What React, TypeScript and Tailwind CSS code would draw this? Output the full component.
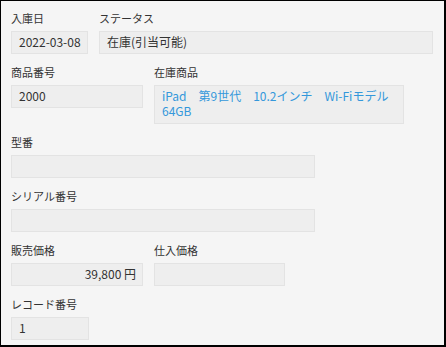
type FieldProps = {
  label: string;
  width: string;
  children?: React.ReactNode;
  box?: string;
};

function Field({ label, width, children, box = "" }: FieldProps) {
  return (
    <div className={width}>
      <div className="h-[18px] leading-[18px] mb-[4px] text-[11px] text-[#333] whitespace-nowrap">
        {label}
      </div>
      <div
        className={`min-h-[23px] border border-[#e3e3e3] bg-[#eeeeee] pl-[7px] pr-[6px] pt-[2px] pb-[4px] text-[12px] leading-[15px] text-[#333] ${box}`}
      >
        {children}
      </div>
    </div>
  );
}

function App() {
  return (
    <div
      className="w-[446px] h-[347px] bg-[#f5f5f5] border-l border-t border-r-2 border-b-2 border-black pl-[10px] pt-[8px] flex flex-col gap-[9px]"
      style={{ fontFamily: '"Noto Sans CJK JP", "Noto Sans", sans-serif' }}
    >
      <div className="flex gap-[11px]">
        <Field label="入庫日" width="w-[77px]">2022-03-08</Field>
        <Field label="ステータス" width="w-[334px]">在庫(引当可能)</Field>
      </div>
      <div className="flex gap-[11px]">
        <Field label="商品番号" width="w-[132px]">2000</Field>
        <Field label="在庫商品" width="w-[250px]" box="text-[#3498db] pb-[5px]">
          iPad　第9世代　10.2インチ　Wi-Fiモデル　64GB
        </Field>
      </div>
      <Field label="型番" width="w-[304px]" />
      <Field label="シリアル番号" width="w-[304px]" />
      <div className="flex gap-[11px]">
        <Field label="販売価格" width="w-[132px]" box="text-right">
          39,800 円
        </Field>
        <Field label="仕入価格" width="w-[131px]" />
      </div>
      <Field label="レコード番号" width="w-[78px]">1</Field>
    </div>
  );
}

export default App;
